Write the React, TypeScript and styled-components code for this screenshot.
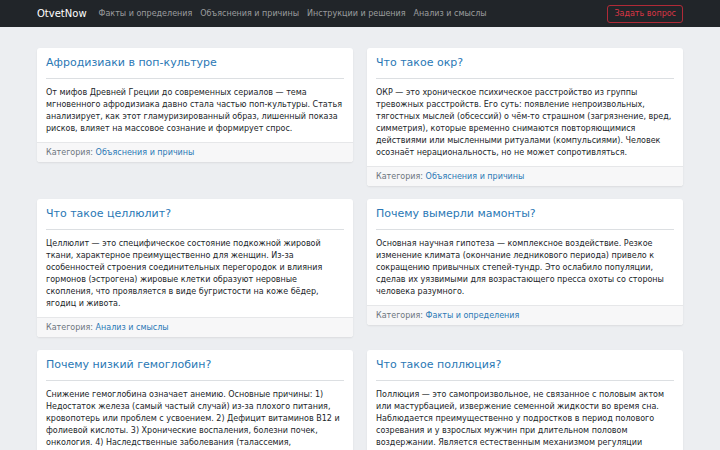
import styled, { createGlobalStyle } from 'styled-components';

const GlobalStyle = createGlobalStyle`
  * { box-sizing: border-box; }
  body {
    margin: 0;
    background-color: #eceef1;
    font-family: "DejaVu Sans", "Noto Sans", sans-serif;
    color: #212529;
  }
`;

const Navbar = styled.nav`
  background-color: #212529;
  height: 27px;
`;

const NavInner = styled.div`
  max-width: 646px;
  height: 100%;
  margin: 0 auto;
  display: flex;
  align-items: center;
`;

const Brand = styled.a`
  font-size: 10px;
  color: #fff;
  text-decoration: none;
  margin-right: 8px;
`;

const NavLink = styled.a`
  font-size: 8px;
  color: rgba(255, 255, 255, 0.55);
  text-decoration: none;
  padding: 0 4px;
`;

const AskButton = styled.a`
  margin-left: auto;
  height: 18px;
  padding: 0 6px;
  display: flex;
  align-items: center;
  font-size: 8px;
  color: #dc3545;
  border: 1px solid #b02a37;
  border-radius: 3px;
  text-decoration: none;
`;

const Main = styled.main`
  max-width: 646px;
  margin: 21px auto 0;
  display: grid;
  grid-template-columns: 1fr 1fr;
  column-gap: 14px;
  row-gap: 13px;
  align-items: start;
`;

const Card = styled.article`
  background: #fff;
  border-radius: 3px;
  box-shadow: 0 1px 2px rgba(0, 0, 0, 0.08);
  overflow: hidden;
`;

const CardBody = styled.div`
  padding: 7px 9px 7px;
`;

const Title = styled.h2`
  margin: 0;
  font-size: 11px;
  font-weight: 400;
  line-height: 15px;
  color: #2a78b5;
`;

const Rule = styled.hr`
  margin: 8px 0 8px;
  border: 0;
  border-top: 1px solid #dcdfe2;
`;

const Text = styled.p`
  margin: 0;
  font-size: 8px;
  line-height: 12px;
`;

const CardFooter = styled.div`
  padding: 4px 9px 3px;
  background: #f7f7f8;
  border-top: 1px solid #e6e7e9;
  font-size: 8px;
  line-height: 12px;
  color: #6c757d;
`;

const CategoryLink = styled.a`
  color: #2a78b5;
  text-decoration: none;
`;

const navItems = [
  'Факты и определения',
  'Объяснения и причины',
  'Инструкции и решения',
  'Анализ и смыслы',
];

const articles = [
  {
    title: 'Афродизиаки в поп-культуре',
    text: 'От мифов Древней Греции до современных сериалов — тема мгновенного афродизиака давно стала частью поп-культуры. Статья анализирует, как этот гламуризированный образ, лишенный показа рисков, влияет на массовое сознание и формирует спрос.',
    category: 'Объяснения и причины',
  },
  {
    title: 'Что такое окр?',
    text: 'ОКР — это хроническое психическое расстройство из группы тревожных расстройств. Его суть: появление непроизвольных, тягостных мыслей (обсессий) о чём-то страшном (загрязнение, вред, симметрия), которые временно снимаются повторяющимися действиями или мысленными ритуалами (компульсиями). Человек осознаёт нерациональность, но не может сопротивляться.',
    category: 'Объяснения и причины',
  },
  {
    title: 'Что такое целлюлит?',
    text: 'Целлюлит — это специфическое состояние подкожной жировой ткани, характерное преимущественно для женщин. Из-за особенностей строения соединительных перегородок и влияния гормонов (эстрогена) жировые клетки образуют неровные скопления, что проявляется в виде бугристости на коже бёдер, ягодиц и живота.',
    category: 'Анализ и смыслы',
  },
  {
    title: 'Почему вымерли мамонты?',
    text: 'Основная научная гипотеза — комплексное воздействие. Резкое изменение климата (окончание ледникового периода) привело к сокращению привычных степей-тундр. Это ослабило популяции, сделав их уязвимыми для возрастающего пресса охоты со стороны человека разумного.',
    category: 'Факты и определения',
  },
  {
    title: 'Почему низкий гемоглобин?',
    text: 'Снижение гемоглобина означает анемию. Основные причины: 1) Недостаток железа (самый частый случай) из-за плохого питания, кровопотерь или проблем с усвоением. 2) Дефицит витаминов B12 и фолиевой кислоты. 3) Хронические воспаления, болезни почек, онкология. 4) Наследственные заболевания (талассемия, серповидноклеточная анемия).',
    category: 'Факты и определения',
  },
  {
    title: 'Что такое поллюция?',
    text: 'Поллюция — это самопроизвольное, не связанное с половым актом или мастурбацией, извержение семенной жидкости во время сна. Наблюдается преимущественно у подростков в период полового созревания и у взрослых мужчин при длительном половом воздержании. Является естественным механизмом регуляции репродуктивной системы.',
    category: 'Факты и определения',
  },
];

export default function App() {
  return (
    <>
      <GlobalStyle />
      <Navbar>
        <NavInner>
          <Brand href="#">OtvetNow</Brand>
          {navItems.map((item) => (
            <NavLink key={item} href="#">
              {item}
            </NavLink>
          ))}
          <AskButton href="#">Задать вопрос</AskButton>
        </NavInner>
      </Navbar>
      <Main>
        {articles.map((a) => (
          <Card key={a.title}>
            <CardBody>
              <Title>{a.title}</Title>
              <Rule />
              <Text>{a.text}</Text>
            </CardBody>
            <CardFooter>
              Категория: <CategoryLink href="#">{a.category}</CategoryLink>
            </CardFooter>
          </Card>
        ))}
      </Main>
    </>
  );
}
